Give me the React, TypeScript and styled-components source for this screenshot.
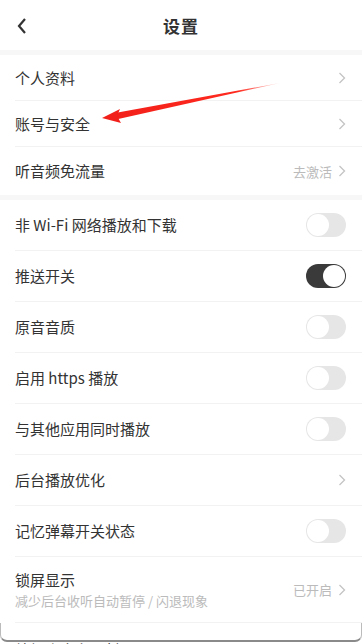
import styled, { createGlobalStyle } from "styled-components";

const GlobalStyle = createGlobalStyle`
  html, body {
    margin: 0;
    padding: 0;
    background: #ffffff;
  }
  body {
    font-family: "Noto Sans CJK SC", "Noto Sans", sans-serif;
    color: #333333;
  }
`;

const Page = styled.div`
  position: relative;
  width: 362px;
  height: 644px;
  overflow: hidden;
  background: #ffffff;
`;

const Header = styled.div`
  height: 50px;
  display: flex;
  align-items: center;
  justify-content: center;
  position: relative;

  .back {
    position: absolute;
    left: 16px;
    top: 17px;
  }
`;

const Title = styled.h1`
  margin: 0;
  font-size: 17px;
  font-weight: 700;
  color: #333333;
  letter-spacing: 1px;
`;

const Band = styled.div`
  height: 5px;
  background: #f7f7f7;
`;

const Row = styled.div<{ $h: number; $last?: boolean }>`
  height: ${(p) => p.$h}px;
  margin-left: 15px;
  padding-right: 16px;
  display: flex;
  align-items: center;
  justify-content: space-between;
  border-bottom: ${(p) => (p.$last ? "none" : "1px solid #f2f2f2")};
  box-sizing: border-box;
`;

const Label = styled.div`
  display: flex;
  flex-direction: column;
  gap: 2px;

  .main {
    font-size: 15px;
    color: #333333;
    line-height: 20px;
  }
  .sub {
    font-size: 13px;
    color: #bbbbbb;
    line-height: 17px;
  }
`;

const Side = styled.div`
  display: flex;
  align-items: center;
  gap: 6px;
  font-size: 13px;
  color: #bbbbbb;
`;

const Toggle = styled.div<{ $on?: boolean }>`
  width: 40px;
  height: 24px;
  border-radius: 12px;
  background: ${(p) => (p.$on ? "#3a3a3a" : "#e6e6e6")};
  display: flex;
  align-items: center;
  justify-content: ${(p) => (p.$on ? "flex-end" : "flex-start")};
  padding: 1px;
  box-sizing: border-box;

  &::after {
    content: "";
    width: 22px;
    height: 22px;
    border-radius: 50%;
    background: #ffffff;
  }
`;

const SheetEdge = styled.div`
  height: 17px;
  background: #ffffff;
  border-bottom: 2px solid #8a8a8a;
  border-left: 1px solid #bbbbbb;
  border-right: 1px solid #bbbbbb;
  border-radius: 0 0 7px 7px;
`;

const CutRow = styled.div`
  margin-left: 15px;
  font-size: 15px;
  color: #333333;
  line-height: 20px;
  margin-top: -2px;
`;

const Arrow = styled.svg`
  position: absolute;
  left: 0;
  top: 0;
  pointer-events: none;
`;

const Chevron = () => (
  <svg width="8" height="12" viewBox="0 0 8 12">
    <path d="M1.5 1 L6.5 6 L1.5 11" fill="none" stroke="#c4c4c4" strokeWidth="1.3" />
  </svg>
);

type Item = {
  label: string;
  sub?: string;
  value?: string;
  kind: "link" | "toggle";
  on?: boolean;
};

const groupOne: Item[] = [
  { label: "个人资料", kind: "link" },
  { label: "账号与安全", kind: "link" },
  { label: "听音频免流量", value: "去激活", kind: "link" },
];

const groupTwo: Item[] = [
  { label: "非 Wi-Fi 网络播放和下载", kind: "toggle" },
  { label: "推送开关", kind: "toggle", on: true },
  { label: "原音音质", kind: "toggle" },
  { label: "启用 https 播放", kind: "toggle" },
  { label: "与其他应用同时播放", kind: "toggle" },
  { label: "后台播放优化", kind: "link" },
  { label: "记忆弹幕开关状态", kind: "toggle" },
];

const SettingRow = ({ item, h, last }: { item: Item; h: number; last?: boolean }) => (
  <Row $h={h} $last={last}>
    <Label>
      <span className="main">{item.label}</span>
      {item.sub && <span className="sub">{item.sub}</span>}
    </Label>
    {item.kind === "toggle" ? (
      <Toggle $on={item.on} />
    ) : (
      <Side>
        {item.value && <span>{item.value}</span>}
        <Chevron />
      </Side>
    )}
  </Row>
);

export default function App() {
  return (
    <>
      <GlobalStyle />
      <Page>
        <Header>
          <svg className="back" width="12" height="18" viewBox="0 0 12 18">
            <path d="M9 2 L3 9 L9 16" fill="none" stroke="#333" strokeWidth="2.2" />
          </svg>
          <Title>设置</Title>
        </Header>
        <Band />
        {groupOne.map((it, i) => (
          <SettingRow key={it.label} item={it} h={i === 2 ? 48 : 46} last={i === 2} />
        ))}
        <Band />
        {groupTwo.map((it) => (
          <SettingRow key={it.label} item={it} h={51} />
        ))}
        <SettingRow
          item={{ label: "锁屏显示", sub: "减少后台收听自动暂停 / 闪退现象", value: "已开启", kind: "link" }}
          h={66}
        />
        <SheetEdge />
        <CutRow>编辑个人主页封面</CutRow>

        <Arrow width="362" height="644" viewBox="0 0 362 644">
          <defs>
            <linearGradient id="tail" x1="280" y1="83" x2="112" y2="117" gradientUnits="userSpaceOnUse">
              <stop offset="0" stopColor="#ff2a1f" stopOpacity="0.15" />
              <stop offset="0.25" stopColor="#ff2a1f" stopOpacity="1" />
              <stop offset="1" stopColor="#f2201a" stopOpacity="1" />
            </linearGradient>
          </defs>
          <path d="M280 83 L115 113 L116 119.5 Z" fill="url(#tail)" />
          <path d="M102 118 L120 109 L117 116 L121 123 Z" fill="#f2201a" />
        </Arrow>
      </Page>
    </>
  );
}
